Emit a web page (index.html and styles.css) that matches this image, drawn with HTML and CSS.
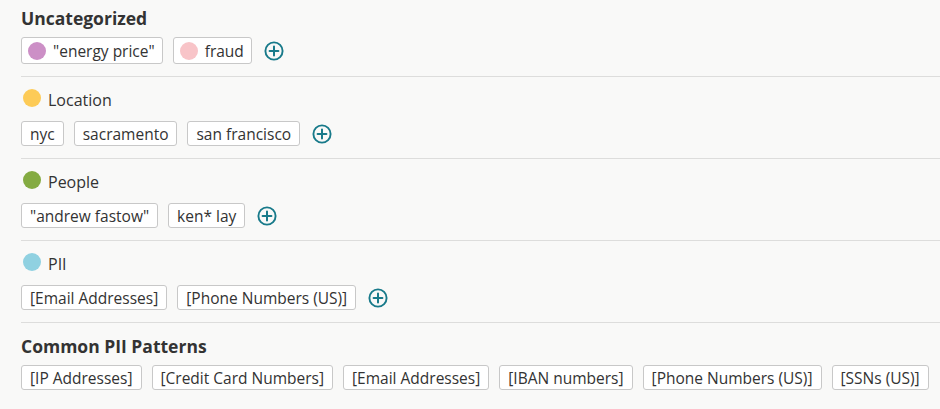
FILE: index.html
```html
<!DOCTYPE html>
<html lang="en">
<head>
<meta charset="utf-8">
<title>Tags</title>
<link rel="stylesheet" href="styles.css">
</head>
<body>
<main class="panel">
  <section class="group group-first">
    <h2 class="group-title">Uncategorized</h2>
    <div class="tags">
      <span class="tag tag-dot"><span class="dot dot-purple"></span>"energy price"</span>
      <span class="tag tag-dot"><span class="dot dot-pink"></span>fraud</span>
      <button class="add" type="button" aria-label="Add"><svg viewBox="0 0 20 20" width="20" height="20"><circle cx="10" cy="10" r="8.6" fill="none" stroke="currentColor" stroke-width="1.9"/><path d="M10 5.6v8.8M5.6 10h8.8" stroke="currentColor" stroke-width="2" stroke-linecap="round"/></svg></button>
    </div>
  </section>
  <section class="group">
    <div class="cat-title"><span class="dot dot-yellow"></span><span class="cat-name">Location</span></div>
    <div class="tags">
      <span class="tag">nyc</span>
      <span class="tag">sacramento</span>
      <span class="tag">san francisco</span>
      <button class="add" type="button" aria-label="Add"><svg viewBox="0 0 20 20" width="20" height="20"><circle cx="10" cy="10" r="8.6" fill="none" stroke="currentColor" stroke-width="1.9"/><path d="M10 5.6v8.8M5.6 10h8.8" stroke="currentColor" stroke-width="2" stroke-linecap="round"/></svg></button>
    </div>
  </section>
  <section class="group">
    <div class="cat-title"><span class="dot dot-green"></span><span class="cat-name">People</span></div>
    <div class="tags">
      <span class="tag">"andrew fastow"</span>
      <span class="tag">ken* lay</span>
      <button class="add" type="button" aria-label="Add"><svg viewBox="0 0 20 20" width="20" height="20"><circle cx="10" cy="10" r="8.6" fill="none" stroke="currentColor" stroke-width="1.9"/><path d="M10 5.6v8.8M5.6 10h8.8" stroke="currentColor" stroke-width="2" stroke-linecap="round"/></svg></button>
    </div>
  </section>
  <section class="group">
    <div class="cat-title"><span class="dot dot-blue"></span><span class="cat-name">PII</span></div>
    <div class="tags">
      <span class="tag">[Email Addresses]</span>
      <span class="tag">[Phone Numbers (US)]</span>
      <button class="add" type="button" aria-label="Add"><svg viewBox="0 0 20 20" width="20" height="20"><circle cx="10" cy="10" r="8.6" fill="none" stroke="currentColor" stroke-width="1.9"/><path d="M10 5.6v8.8M5.6 10h8.8" stroke="currentColor" stroke-width="2" stroke-linecap="round"/></svg></button>
    </div>
  </section>
  <section class="group group-last">
    <h2 class="group-title">Common PII Patterns</h2>
    <div class="tags">
      <span class="tag">[IP Addresses]</span>
      <span class="tag">[Credit Card Numbers]</span>
      <span class="tag">[Email Addresses]</span>
      <span class="tag">[IBAN numbers]</span>
      <span class="tag">[Phone Numbers (US)]</span>
      <span class="tag">[SSNs (US)]</span>
    </div>
  </section>
</main>
</body>
</html>
```
FILE: styles.css
```css
html, body {
  margin: 0;
  padding: 0;
  background: #f9f9f8;
}

body {
  font-family: "Open Sans", "Noto Sans", sans-serif;
  color: #333;
}

.panel {
  padding-left: 21px;
}

.group {
  border-bottom: 1px solid #dddddc;
  padding: 10px 0 12px;
}

.group-first {
  padding-top: 7px;
}

.group-last {
  border-bottom: none;
  padding-top: 12px;
}

.group-title {
  margin: 0 0 8px;
  font-size: 17.5px;
  line-height: 22px;
  font-weight: 700;
  color: #333;
}

.cat-title {
  display: flex;
  align-items: flex-start;
  gap: 7px;
  height: 24px;
  margin-bottom: 10px;
  padding-left: 2px;
}

.cat-title .dot {
  margin-top: 2px;
}

.cat-name {
  padding-top: 2px;
  font-size: 16px;
  line-height: 22px;
}

.tags {
  display: flex;
  align-items: center;
  gap: 10px;
}

.tag {
  box-sizing: border-box;
  display: inline-flex;
  align-items: center;
  height: 25px;
  padding: 0 8px;
  background: #fff;
  border: 1px solid #c8c8c8;
  border-radius: 3px;
  font-size: 15.5px;
  line-height: 20px;
  color: #333;
  white-space: nowrap;
}

.tag-dot {
  height: 27px;
  padding-left: 6px;
  padding-right: 7px;
  gap: 7px;
}

.dot {
  display: inline-block;
  flex: none;
  width: 18px;
  height: 18px;
  border-radius: 50%;
}

.dot-purple { background: #cc8fc6; }
.dot-pink { background: #f8c4c8; }
.dot-yellow { background: #fdcb57; }
.dot-green { background: #84ab42; }
.dot-blue { background: #90d1e1; }

.add {
  display: inline-flex;
  align-items: center;
  justify-content: center;
  margin-left: 2px;
  padding: 0;
  border: none;
  background: none;
  color: #187a8a;
  cursor: pointer;
}

.add svg {
  display: block;
}
```
